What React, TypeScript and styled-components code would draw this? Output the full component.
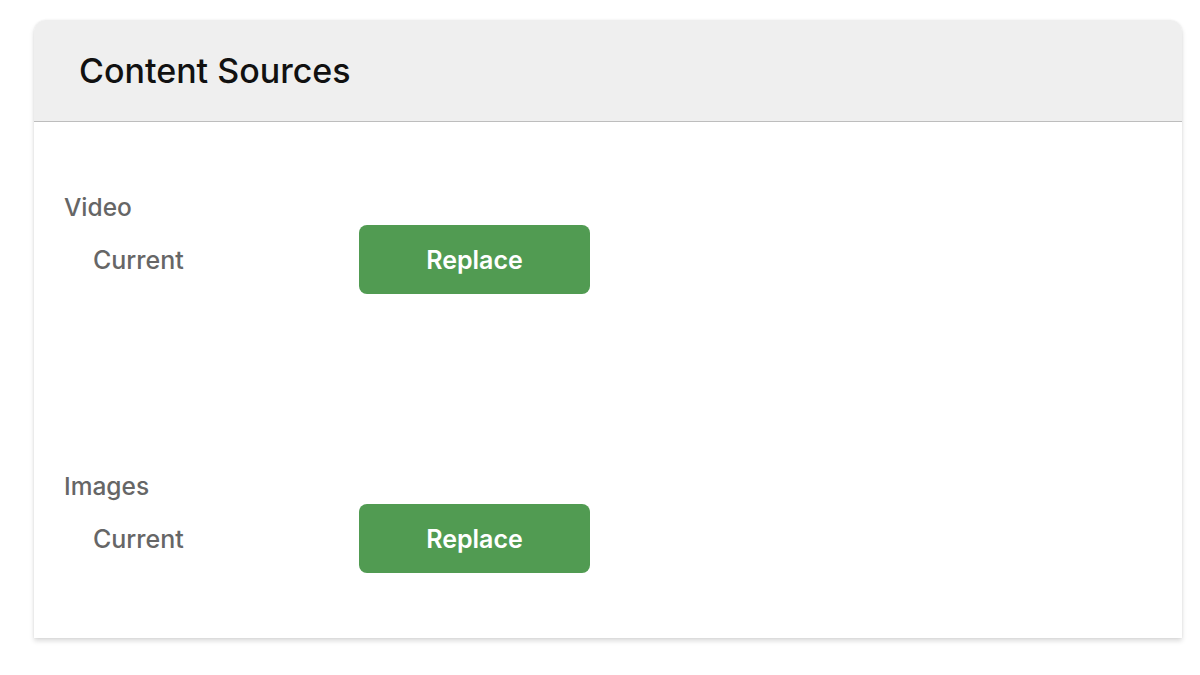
import styled, { createGlobalStyle } from 'styled-components';

const GlobalStyle = createGlobalStyle`
  body {
    margin: 0;
    background: #ffffff;
    font-family: Inter, "Liberation Sans", sans-serif;
  }
`;

interface ISource {
  label: string;
}

const sources: ISource[] = [{ label: 'Video' }, { label: 'Images' }];

const SourceSection = (props: ISource & { first: boolean }) => {
  return (
    <Section $first={props.first}>
      <SectionLabel>{props.label}</SectionLabel>
      <SourceRow>
        <RowLabel>Current</RowLabel>
        <ReplaceButton>Replace</ReplaceButton>
      </SourceRow>
    </Section>
  );
};

export default function App() {
  return (
    <Page>
      <GlobalStyle />
      <Card>
        <CardHeader>
          <Title>Content Sources</Title>
        </CardHeader>
        <CardBody>
          {sources.map((s, i) => (
            <SourceSection key={s.label} label={s.label} first={i === 0} />
          ))}
        </CardBody>
      </Card>
    </Page>
  );
}

const Page = styled.div`
  padding: 20px 18px 40px 34px;
`;

const Card = styled.div`
  width: 1148px;
  background: #ffffff;
  border-radius: 12px 12px 0 0;
  box-shadow: 0 3px 5px rgba(0, 0, 0, 0.14), 0 0 2px rgba(0, 0, 0, 0.08);
  overflow: hidden;
`;

const CardHeader = styled.div`
  height: 102px;
  background: #efefef;
  border-bottom: 1px solid #bdbdbd;
  display: flex;
  align-items: center;
  padding-left: 45px;
  box-sizing: border-box;
`;

const Title = styled.h1`
  margin: 0;
  font-size: 34px;
  font-weight: 500;
  color: #111111;
  letter-spacing: 0;
`;

const CardBody = styled.div`
  padding: 0 30px 65px 30px;
`;

const Section = styled.div<{ $first: boolean }>`
  padding-top: ${(p) => (p.$first ? '72px' : '179px')};
`;

const SectionLabel = styled.div`
  font-size: 24.5px;
  line-height: 26px;
  color: #666666;
  font-weight: 500;
`;

const SourceRow = styled.div`
  display: flex;
  align-items: center;
  margin-top: 5px;
  padding-left: 29px;
`;

const RowLabel = styled.div`
  width: 266px;
  font-size: 25px;
  color: #666666;
  font-weight: 500;
`;

const ReplaceButton = styled.button`
  width: 231px;
  height: 69px;
  border: 0;
  border-radius: 8px;
  background-color: #519b52;
  color: #ffffff;
  font-family: Inter, "Liberation Sans", sans-serif;
  font-size: 25px;
  font-weight: 600;
  cursor: pointer;
`;
